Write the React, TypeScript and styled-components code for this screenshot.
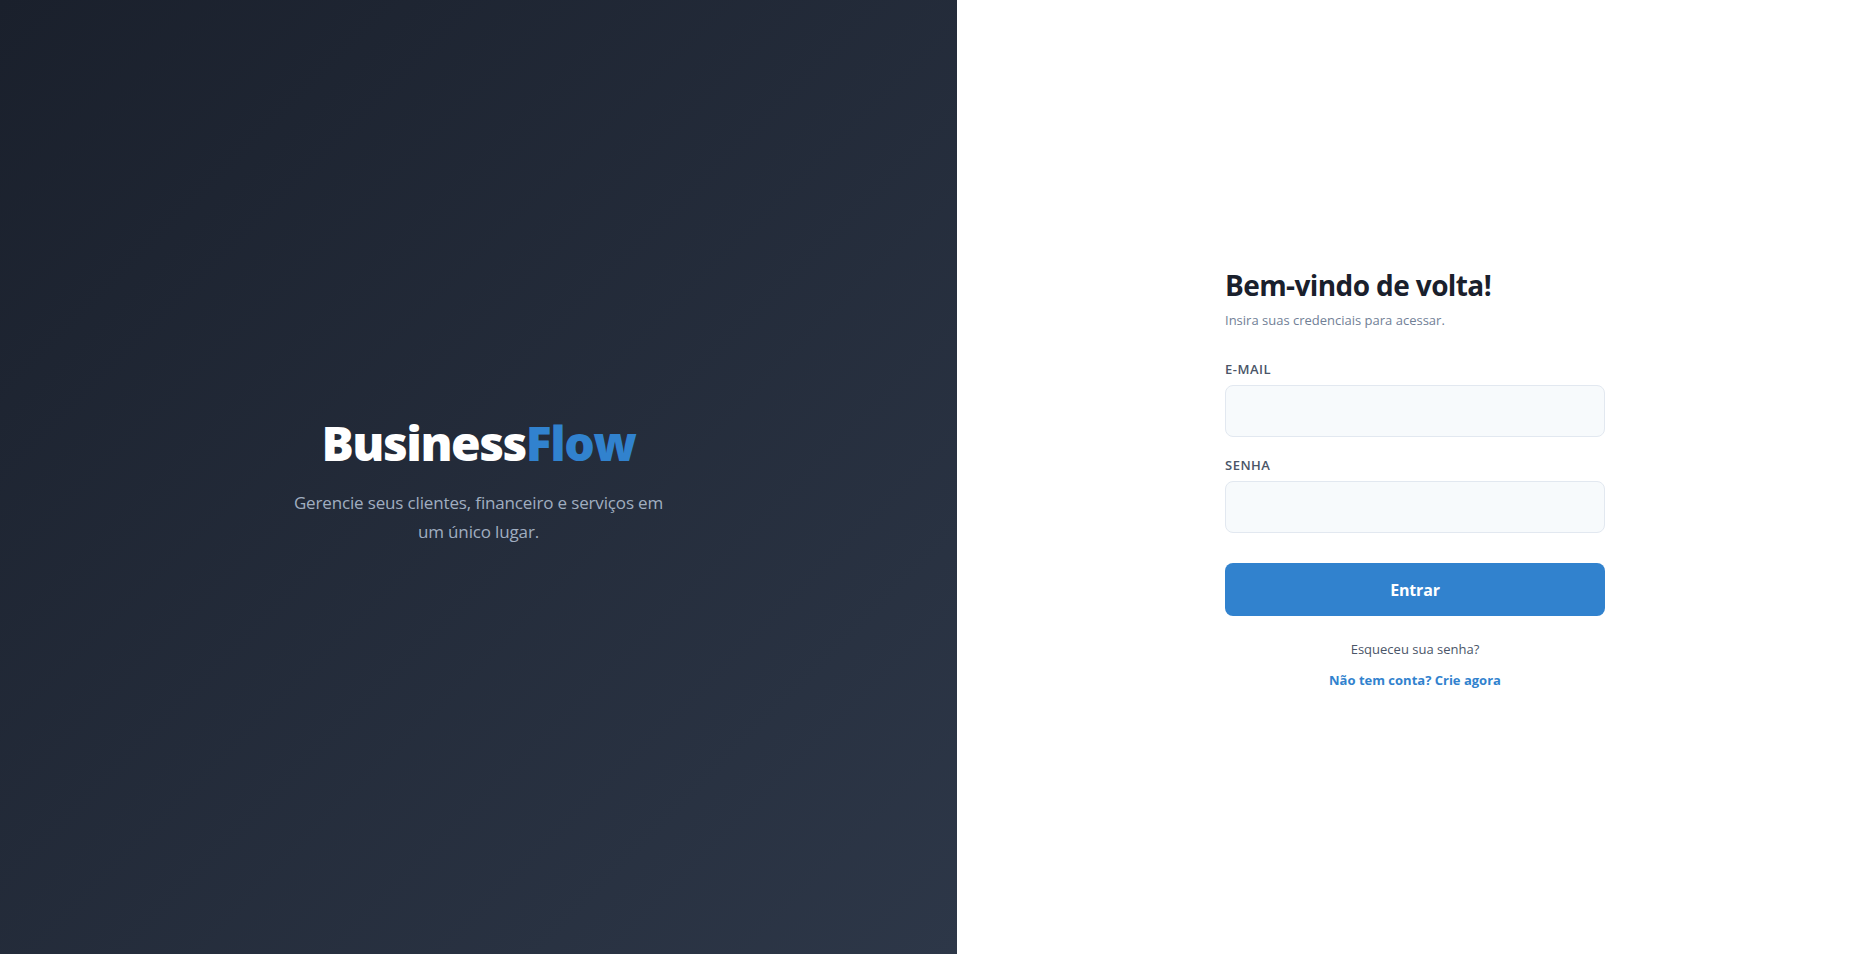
import React from "react";
import styled, { createGlobalStyle } from "styled-components";

const GlobalStyle = createGlobalStyle`
  * {
    box-sizing: border-box;
  }

  html,
  body {
    margin: 0;
    padding: 0;
    height: 100%;
  }

  body {
    font-family: "Open Sans", "Noto Sans", sans-serif;
    -webkit-font-smoothing: antialiased;
  }

  #root {
    height: 100%;
  }
`;

const Page = styled.div`
  display: flex;
  width: 100%;
  height: 100vh;
  min-height: 954px;
`;

const BrandPanel = styled.section`
  flex: 0 0 957px;
  display: flex;
  flex-direction: column;
  justify-content: center;
  align-items: center;
  background: linear-gradient(135deg, #1a202c 0%, #2d3748 100%);
  text-align: center;
  padding: 6px 40px 0;
`;

const Logo = styled.h1`
  margin: 0 0 16px;
  font-size: 48px;
  font-weight: 800;
  line-height: 1.2;
  color: #ffffff;
  letter-spacing: -1.5px;
`;

const LogoAccent = styled.span`
  color: #3182ce;
`;

const Tagline = styled.p`
  margin: 0;
  max-width: 380px;
  font-size: 17px;
  line-height: 29px;
  letter-spacing: -0.15px;
  color: #a0aec0;
`;

const FormPanel = styled.section`
  flex: 1;
  display: flex;
  justify-content: center;
  align-items: center;
  background: #ffffff;
`;

const FormBox = styled.form`
  width: 380px;
  display: flex;
  flex-direction: column;
  padding-top: 6px;
`;

const Title = styled.h2`
  margin: 0 0 8px;
  font-size: 28px;
  font-weight: 700;
  line-height: 1.2;
  letter-spacing: -0.6px;
  color: #1a202c;
`;

const Subtitle = styled.p`
  margin: 0 0 30px;
  font-size: 13px;
  line-height: 21px;
  color: #718096;
`;

const Field = styled.div`
  display: flex;
  flex-direction: column;
  margin-bottom: 20px;
`;

const Label = styled.label`
  margin-bottom: 8px;
  font-size: 13px;
  font-weight: 600;
  line-height: 16px;
  letter-spacing: 0.5px;
  text-transform: uppercase;
  color: #4a5568;
`;

const Input = styled.input`
  height: 52px;
  padding: 0 16px;
  border: 1px solid #e2e8f0;
  border-radius: 8px;
  background: #f7fafc;
  font-family: inherit;
  font-size: 16px;
  color: #1a202c;
  outline: none;
`;

const SubmitButton = styled.button`
  margin-top: 10px;
  height: 53px;
  border: none;
  border-radius: 8px;
  background: #3182ce;
  color: #ffffff;
  font-family: inherit;
  font-size: 16px;
  font-weight: 700;
  letter-spacing: -0.2px;
  cursor: pointer;
`;

const Links = styled.div`
  display: flex;
  flex-direction: column;
  align-items: center;
  gap: 10px;
  margin-top: 23px;
`;

const TextLink = styled.a<{ $strong?: boolean }>`
  font-size: 13px;
  line-height: 21px;
  text-decoration: none;
  font-weight: ${(p) => (p.$strong ? 700 : 400)};
  color: ${(p) => (p.$strong ? "#3182ce" : "#4a5568")};
  cursor: pointer;
`;

export default function App() {
  return (
    <>
      <GlobalStyle />
      <Page>
        <BrandPanel>
          <Logo>
            Business<LogoAccent>Flow</LogoAccent>
          </Logo>
          <Tagline>
            Gerencie seus clientes, financeiro e serviços em um único lugar.
          </Tagline>
        </BrandPanel>
        <FormPanel>
          <FormBox onSubmit={(e) => e.preventDefault()}>
            <Title>Bem-vindo de volta!</Title>
            <Subtitle>Insira suas credenciais para acessar.</Subtitle>
            <Field>
              <Label htmlFor="email">E-mail</Label>
              <Input id="email" type="email" />
            </Field>
            <Field>
              <Label htmlFor="senha">Senha</Label>
              <Input id="senha" type="password" />
            </Field>
            <SubmitButton type="submit">Entrar</SubmitButton>
            <Links>
              <TextLink>Esqueceu sua senha?</TextLink>
              <TextLink $strong>Não tem conta? Crie agora</TextLink>
            </Links>
          </FormBox>
        </FormPanel>
      </Page>
    </>
  );
}
